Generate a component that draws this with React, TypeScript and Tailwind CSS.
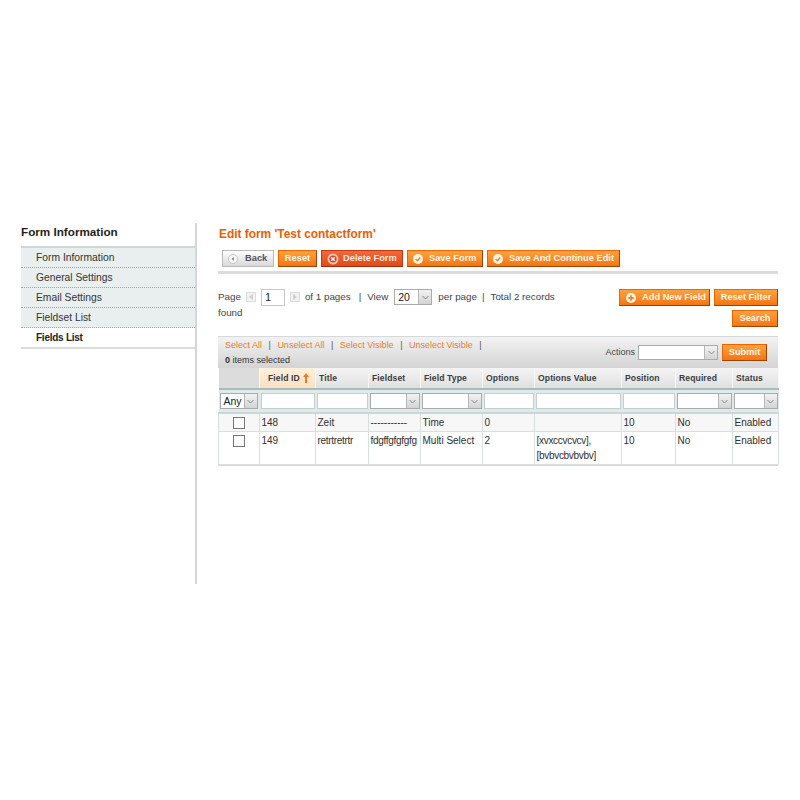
const font = "font-['Liberation_Sans',Arial,sans-serif]";

const navItems = ["Form Information", "General Settings", "Email Settings", "Fieldset List"];

const orangeBtn =
  "flex h-[17px] shrink-0 items-center border border-[#ed6502] border-b-[#a04300] border-r-[#a04300] bg-gradient-to-b from-[#ffa23c] to-[#f4750f] text-[9.3px] font-bold text-[#fff6ec] whitespace-nowrap";

function CheckIcon() {
  return (
    <svg width="10" height="10" viewBox="0 0 11 11" className="shrink-0">
      <circle cx="5.5" cy="5.5" r="5.5" fill="#fff4e8" />
      <path d="M3 5.6 L4.9 7.4 L8 3.8" fill="none" stroke="#f3841f" strokeWidth="1.6" />
    </svg>
  );
}

function PlusIcon() {
  return (
    <svg width="10" height="10" viewBox="0 0 11 11" className="shrink-0">
      <circle cx="5.5" cy="5.5" r="5.5" fill="#fff4e8" />
      <path d="M5.5 2.5 V8.5 M2.5 5.5 H8.5" stroke="#f3841f" strokeWidth="2" />
    </svg>
  );
}

function CancelIcon() {
  return (
    <svg width="12" height="12" viewBox="0 0 12 12" className="shrink-0">
      <circle cx="6" cy="6" r="5.5" fill="#f6c4ae" />
      <circle cx="6" cy="6" r="3.6" fill="#d8442a" />
      <path d="M4.2 4.2 L7.8 7.8 M7.8 4.2 L4.2 7.8" stroke="#fff" strokeWidth="1.4" />
    </svg>
  );
}

function Chevron() {
  return (
    <svg width="7" height="5" viewBox="0 0 7 5">
      <path d="M0.5 1 L3.5 4 L6.5 1" fill="none" stroke="#7d8a8a" strokeWidth="1" />
    </svg>
  );
}

function Select({ width, value, height = 16 }: { width: string; value?: string; height?: number }) {
  return (
    <div
      className={`flex ${width} ${height === 16 ? "h-[16px]" : "h-[15px]"} items-center border border-[#aaaaaa] bg-white`}
    >
      <span className="flex-1 pl-[3px] text-left text-[10.5px] leading-none text-[#222]">{value}</span>
      <span className="flex h-full w-[13px] shrink-0 items-center justify-center border-l border-[#b5b5b5] bg-gradient-to-b from-[#f2f2f2] to-[#d4d4d4]">
        <Chevron />
      </span>
    </div>
  );
}

function TextFilter() {
  return <div className="h-[16px] w-full border border-[#c5cfcf] bg-white" />;
}

function PagerArrow({ dir }: { dir: "left" | "right" }) {
  return (
    <span className="flex h-[10px] w-[10px] items-center justify-center border border-[#dddddd] bg-[#f1f1f1]">
      <svg width="4" height="6" viewBox="0 0 4 6">
        <path d={dir === "left" ? "M4 0 L0 3 L4 6 Z" : "M0 0 L4 3 L0 6 Z"} fill="#cfcfcf" />
      </svg>
    </span>
  );
}

const columns = ["", "Field ID", "Title", "Fieldset", "Field Type", "Options", "Options Value", "Position", "Required", "Status"];
const widths = [41, 56, 53, 52, 62, 52, 87, 54, 57, 46];

const rows = [
  { id: "148", title: "Zeit", fieldset: "-----------", type: "Time", options: "0", value: [] as string[], position: "10", required: "No", status: "Enabled" },
  { id: "149", title: "retrtretrtr", fieldset: "fdgffgfgfgfg", type: "Multi Select", options: "2", value: ["[xvxccvcvcv],", "[bvbvcbvbvbv]"], position: "10", required: "No", status: "Enabled" },
];

function Cell({ children, tight }: { children?: React.ReactNode; tight?: boolean }) {
  return (
    <td className={`overflow-hidden whitespace-nowrap border-r border-[#dadfe0] px-[1.5px] py-[1px] align-top text-[10px] leading-[15px] text-[#2f2f2f] ${tight ? "tracking-[-0.3px]" : ""}`}>
      {children}
    </td>
  );
}

export default function App() {
  return (
    <div className={`${font} flex min-h-[800px] bg-white pl-[21px] pr-[22px] pt-[223px] text-[10.5px] text-[#444]`}>
      {/* left column */}
      <aside className="h-[361px] w-[176px] shrink-0 border-r-2 border-[#d6d6d6]">
        <h3 className="text-[11.7px] font-bold leading-[18px] text-[#1f1f1f]">Form Information</h3>
        <ul className="mt-[5px] border-t-2 border-[#d0d6d6] border-b-2 border-b-[#dcdcdc]">
          {navItems.map((item) => (
            <li
              key={item}
              className="flex h-[20px] items-center border-b border-dotted border-[#9aa5a5] bg-[#e8efee] pl-[15px] text-[10.3px] text-[#333]"
            >
              {item}
            </li>
          ))}
          <li className="flex h-[19px] items-center pl-[15px] text-[10px] font-bold tracking-[-0.25px] text-[#222]">Fields List</li>
        </ul>
      </aside>

      {/* main column */}
      <main className="ml-[21px] w-[560px] shrink-0">
        <div className="pl-[1px]">
          <h3 className="text-[11.9px] font-bold leading-[22px] text-[#eb5e00]">Edit form 'Test contactform'</h3>
          <div className="mt-[5px] flex gap-[4px] pl-[3px]">
            <button className="flex h-[17px] w-[52px] shrink-0 items-center gap-[7px] border border-[#b9b9b9] bg-gradient-to-b from-white to-[#d9d9d9] pl-[5px] text-[9.3px] font-bold text-[#555]">
              <svg width="10" height="10" viewBox="0 0 10 10" className="shrink-0">
                <circle cx="5" cy="5" r="4.5" fill="#f7f7f7" stroke="#c4c4c4" />
                <path d="M6 3 L3.6 5 L6 7 Z" fill="#8a8a8a" />
              </svg>
              Back
            </button>
            <button className={`${orangeBtn} w-[39px] justify-center`}>Reset</button>
            <button className="flex h-[17px] w-[82px] shrink-0 items-center gap-[4px] whitespace-nowrap border border-[#c8380d] border-b-[#a82c05] bg-gradient-to-b from-[#f2683a] to-[#e04a18] pl-[5px] text-[9.3px] font-bold text-[#ffe9df]">
              <CancelIcon />
              Delete Form
            </button>
            <button className={`${orangeBtn} w-[76px] gap-[6px] pl-[5px]`}>
              <CheckIcon />
              Save Form
            </button>
            <button className={`${orangeBtn} w-[133px] gap-[6px] pl-[5px]`}>
              <CheckIcon />
              Save And Continue Edit
            </button>
          </div>
        </div>
        <div className="mt-[4px] h-[3px] w-full bg-[#dcdcdc]" />

        {/* pager + actions */}
        <div className="mt-[15px] flex h-[47px] items-start justify-between">
          <div className="whitespace-nowrap text-[9.8px] leading-[16px] text-[#444]">
            <div className="flex h-[16px] items-center">
              <span>Page</span>
              <span className="ml-[5px]"><PagerArrow dir="left" /></span>
              <span className="ml-[5px] flex h-[17px] w-[24px] items-center border border-[#c8c8c8] pl-[3px] text-[11px] text-[#222]">1</span>
              <span className="ml-[5px]"><PagerArrow dir="right" /></span>
              <span className="ml-[5px]">of 1 pages</span>
              <span className="ml-[8px]">|</span>
              <span className="ml-[6px]">View</span>
              <span className="ml-[6px]"><Select width="w-[38px]" value="20" /></span>
              <span className="ml-[6px]">per page</span>
              <span className="ml-[5px]">|</span>
              <span className="ml-[6px]">Total 2 records</span>
            </div>
            <div>found</div>
          </div>
          <div className="flex flex-col items-end gap-[4px]">
            <div className="flex gap-[4px]">
              <button className={`${orangeBtn} w-[91px] gap-[6px] pl-[6px]`}>
                <PlusIcon />
                Add New Field
              </button>
              <button className={`${orangeBtn} w-[64px] justify-center`}>Reset Filter</button>
            </div>
            <button className={`${orangeBtn} w-[46px] justify-center`}>Search</button>
          </div>
        </div>

        {/* grid */}
        <div className="w-[560px] border-y border-[#d6d9d9]">
          <div className="flex h-[31px] items-start justify-between bg-gradient-to-b from-[#f2f2f2] to-[#d4d4d4] pl-[7px] pr-[11px]">
            <div className="text-[9px] leading-[14px]">
              <div className="mt-[1px] flex text-[#f07a24]">
                <span>Select All</span>
                <span className="mx-[6.5px] text-[#555]">|</span>
                <span>Unselect All</span>
                <span className="mx-[6.5px] text-[#555]">|</span>
                <span>Select Visible</span>
                <span className="mx-[6.5px] text-[#555]">|</span>
                <span>Unselect Visible</span>
                <span className="mx-[6.5px] text-[#555]">|</span>
              </div>
              <div className="mt-[1px] text-[#333]">
                <b>0</b> items selected
              </div>
            </div>
            <div className="mt-[7px] flex items-center">
              <span className="mr-[3px] text-[9px] text-[#444]">Actions</span>
              <Select width="w-[80px]" height={15} />
              <button className={`${orangeBtn} ml-[4px] w-[45px] justify-center`}>Submit</button>
            </div>
          </div>
          <table className="w-full table-fixed border-collapse">
            <colgroup>
              {widths.map((w, i) => (
                <col key={i} style={{ width: w }} />
              ))}
            </colgroup>
            <thead>
              <tr className="h-[21px] bg-gradient-to-b from-[#f4f4f4] to-[#dfdfdf]">
                {columns.map((col, i) => (
                  <th
                    key={i}
                    className={`whitespace-nowrap border-r border-[#f8f8f8] px-[3px] pt-[1px] text-left text-[8.6px] font-bold tracking-[0.1px] text-[#3c3c3c] ${
                      i === 1 ? "bg-gradient-to-b from-[#fff0dd] to-[#fbdfc2] pl-[8px]" : ""
                    } ${i === 0 ? "bg-[#dcdcdc]" : ""}`}
                  >
                    <span className="inline-flex items-center gap-[3px]">
                      {col}
                      {i === 1 && (
                        <svg width="6" height="10" viewBox="0 0 6 10">
                          <path d="M3 0 L6 4 H4 V10 H2 V4 H0 Z" fill="#f47a20" />
                        </svg>
                      )}
                    </span>
                  </th>
                ))}
              </tr>
              <tr className="h-[24px] border-t-2 border-[#a9bcbc] border-b-2 border-b-[#c8d8d8] bg-[#dfeaea]">
                <th className="px-[1px] font-normal">
                  <Select width="w-[38px]" value="Any" />
                </th>
                <th className="px-[1px] font-normal"><TextFilter /></th>
                <th className="px-[1px] font-normal"><TextFilter /></th>
                <th className="px-[1px] font-normal"><Select width="w-full" /></th>
                <th className="px-[1px] font-normal"><Select width="w-full" /></th>
                <th className="px-[1px] font-normal"><TextFilter /></th>
                <th className="px-[1px] font-normal"><TextFilter /></th>
                <th className="px-[1px] font-normal"><TextFilter /></th>
                <th className="px-[1px] font-normal"><Select width="w-full" /></th>
                <th className="px-[1px] font-normal"><Select width="w-full" /></th>
              </tr>
            </thead>
            <tbody>
              {rows.map((row, i) => (
                <tr key={row.id} className={`border-b border-[#dadfe0] ${i === 0 ? "bg-[#f7f7f7]" : "bg-white"}`}>
                  <td className="border-x border-[#dadfe0] pb-[2px] pt-[3px] align-top">
                    <div className="mx-auto h-[12px] w-[12px] border border-[#777777] bg-white" />
                  </td>
                  <Cell>{row.id}</Cell>
                  <Cell tight={i === 1}>{row.title}</Cell>
                  <Cell tight={i === 1}>{row.fieldset}</Cell>
                  <Cell>{row.type}</Cell>
                  <Cell>{row.options}</Cell>
                  <Cell tight>
                    {row.value.map((v) => (
                      <div key={v}>{v}</div>
                    ))}
                  </Cell>
                  <Cell>{row.position}</Cell>
                  <Cell>{row.required}</Cell>
                  <Cell>{row.status}</Cell>
                </tr>
              ))}
            </tbody>
          </table>
        </div>
      </main>
    </div>
  );
}
